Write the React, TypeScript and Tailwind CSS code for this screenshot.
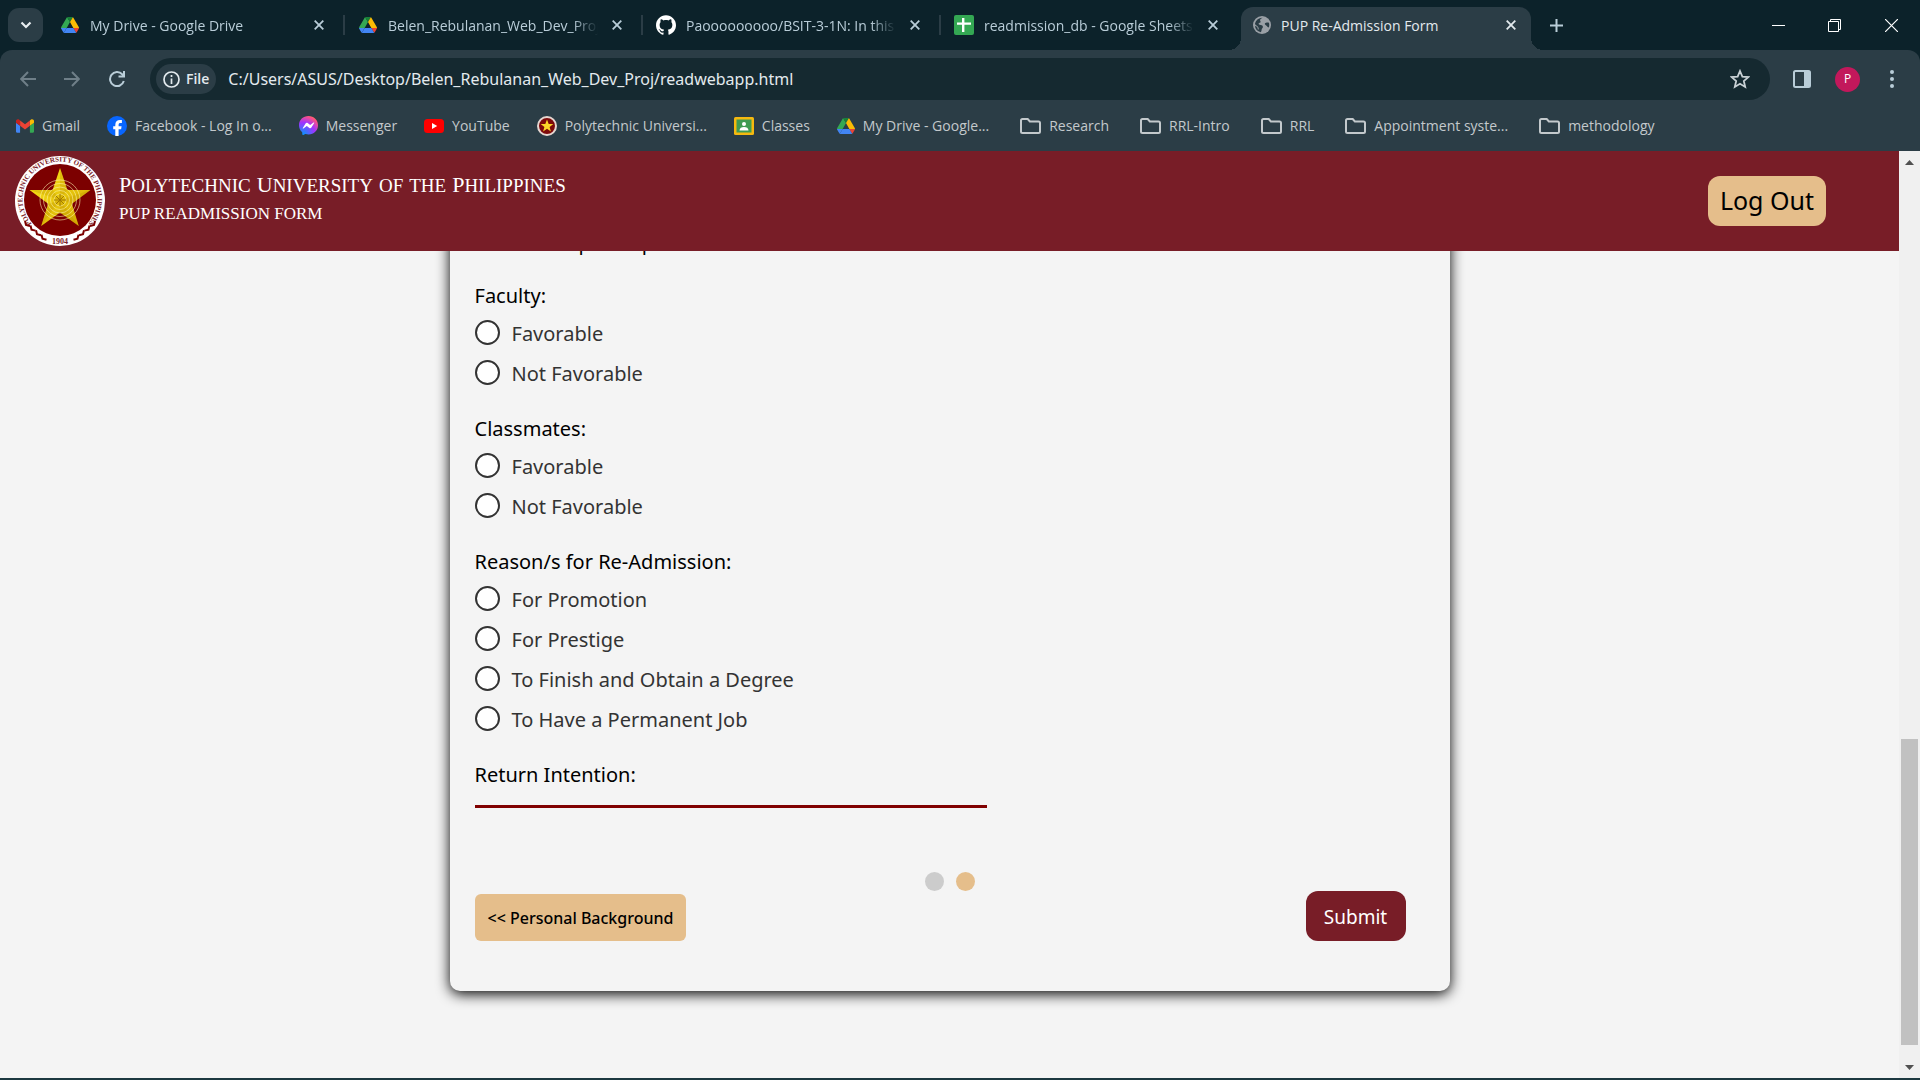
import React from "react";
import { SiGithub } from "react-icons/si";

type IconProps = { className?: string };

const DriveIcon = ({ className = "size-[18px]" }: IconProps) => (
  <svg className={className} viewBox="0 0 87.3 78" aria-hidden="true">
    <path fill="#4285f4" d="m6.6 66.85 3.85 6.65c.8 1.4 1.95 2.5 3.3 3.3l13.75-23.8h-27.5c0 1.55.4 3.1 1.2 4.5z" />
    <path fill="#34a853" d="m43.65 25-13.75-23.8c-1.35.8-2.5 1.9-3.3 3.3l-25.4 44a9.06 9.06 0 0 0-1.2 4.5h27.5z" />
    <path fill="#ea4335" d="m73.55 76.8c1.35-.8 2.5-1.9 3.3-3.3l1.6-2.75 7.65-13.25c.8-1.4 1.2-2.95 1.2-4.5h-27.5l5.85 11.5z" />
    <path fill="#188038" d="m43.65 25 13.75-23.8c-1.35-.8-2.9-1.2-4.5-1.2h-18.5c-1.6 0-3.15.45-4.5 1.2z" />
    <path fill="#4285f4" d="m59.8 53h-32.3l-13.75 23.8c1.35.8 2.9 1.2 4.5 1.2h50.8c1.6 0 3.15-.45 4.5-1.2z" />
    <path fill="#fbbc04" d="m73.4 26.5-12.7-22c-.8-1.4-1.95-2.5-3.3-3.3l-13.75 23.8 16.15 28h27.45c0-1.55-.4-3.1-1.2-4.5z" />
  </svg>
);

const SheetsIcon = () => (
  <svg className="size-5" viewBox="0 0 20 20" aria-hidden="true">
    <rect width="20" height="20" rx="2" fill="#34a853" />
    <path d="M8 3h2.400v4.400H17v2.400h-6.600V17H8V9.800H3V7.400h5z" fill="#fff" />
  </svg>
);

const GlobeIcon = () => (
  <svg className="size-[18px]" viewBox="0 0 18 18" aria-hidden="true">
    <circle cx="9" cy="9" r="9" fill="#9aa0a6" />
    <path
      d="M9.500 1.800c-1 .8-2.200.9-2.400 2.200-.1 1 .9 1.300.4 2.200-.4.700-1.600.5-1.900 1.400-.3 1 .8 1.200 2 1.300 1.500.1 2.400.8 2.300 2-.1 1-1 1.300-1.200 2.300-.1.900-.2 2-.9 3A7.300 7.300 0 0 1 1.900 9.800c1 .6 2.400 1 2.600 2 .2.800.1 1.600.9 2 .6-1.200.3-2.300-.5-3.100C3.700 9.500 2 9 2 7.600a7.300 7.300 0 0 1 7.500-5.800zM15.900 6.800c.5 1.300.5 3.300-.1 4.700-1-.1-1.400-.7-2-1.500-.7-.9-1.900-1-2-2 0-1 1-1.400 2-1.500.7-.1 1.400-.1 2.100.3z"
      fill="#2b3d46"
    />
  </svg>
);

const GmailIcon = () => (
  <svg className="h-3.5 w-[18px]" viewBox="52 42 88 66" aria-hidden="true">
    <path fill="#4285f4" d="M58 108h14V74L52 59v43c0 3.320 2.690 6 6 6" />
    <path fill="#34a853" d="M120 108h14c3.320 0 6-2.690 6-6V59l-20 15" />
    <path fill="#fbbc04" d="M120 48v26l20-15v-8c0-7.420-8.470-11.650-14.400-7.200" />
    <path fill="#ea4335" d="M72 74V48l24 18 24-18v26L96 92" />
    <path fill="#c5221f" d="M52 51v8l20 15V48l-5.600-4.200c-5.940-4.450-14.400-.22-14.400 7.200" />
  </svg>
);

const FacebookIcon = () => (
  <svg className="size-5" viewBox="0 0 20 20" aria-hidden="true">
    <circle cx="10" cy="10" r="10" fill="#0866ff" />
    <path d="M8.300 20v-6.700H6.200v-3h2.100V8.900c0-3.400 1.600-5 4.900-5 .6 0 1.300.1 1.700.2v2.800h-1.300c-1.500 0-2 .6-2 1.900v1.500h3l-.5 3h-2.500V20z" fill="#fff" />
  </svg>
);

const MessengerIcon = () => (
  <svg className="size-[19px]" viewBox="0 0 24 24" aria-hidden="true">
    <defs>
      <radialGradient id="msg" cx="20%" cy="100%" r="110%">
        <stop offset="0" stopColor="#0099ff" />
        <stop offset="0.6" stopColor="#a033ff" />
        <stop offset="0.93" stopColor="#ff5280" />
        <stop offset="1" stopColor="#ff7061" />
      </radialGradient>
    </defs>
    <path fill="url(#msg)" d="M12 0C5.240 0 0 4.950 0 11.640c0 3.500 1.430 6.520 3.770 8.610.2.180.31.430.32.690l.06 2.140c.02.680.72 1.120 1.350.85l2.380-1.050c.2-.09.430-.1.640-.05 1.100.3 2.260.46 3.480.46 6.760 0 12-4.950 12-11.640S18.760 0 12 0" />
    <path fill="#fff" d="m4.800 15.040 3.520-5.590c.56-.89 1.760-1.110 2.610-.48l2.800 2.100c.26.190.61.190.87 0l3.780-2.870c.5-.38 1.160.22.82.76l-3.520 5.590c-.56.89-1.760 1.110-2.610.48l-2.800-2.100a.72.72 0 0 0-.87 0l-3.780 2.870c-.5.380-1.160-.22-.82-.76" />
  </svg>
);

const YoutubeIcon = () => (
  <svg className="h-3.5 w-5" viewBox="0 0 20 14" aria-hidden="true">
    <rect width="20" height="14" rx="3.500" fill="#f00" />
    <path d="M8 4v6l5.200-3z" fill="#fff" />
  </svg>
);

const PupIcon = () => (
  <svg className="size-5" viewBox="0 0 20 20" aria-hidden="true">
    <circle cx="10" cy="10" r="9" fill="#7d0a0a" stroke="#e6d6d0" strokeWidth="2" />
    <path d="M10 3.500l1.700 4.500h4.600l-3.700 2.900 1.300 4.700-3.900-2.800-3.900 2.800 1.300-4.700L3.700 8h4.600z" fill="#fbd628" />
  </svg>
);

const ClassroomIcon = () => (
  <svg className="h-[18px] w-5" viewBox="0 0 20 18" aria-hidden="true">
    <rect width="20" height="18" rx="1.500" fill="#f6b90f" />
    <rect x="2.500" y="2.500" width="15" height="13" fill="#3f9b52" />
    <circle cx="10" cy="7" r="2" fill="#fff" />
    <path d="M5.500 13.500c0-2.500 2-3.600 4.500-3.600s4.500 1.100 4.500 3.600z" fill="#fff" />
  </svg>
);

const FolderIcon = () => (
  <svg className="ml-1 h-4 w-[21px]" viewBox="0 0 21 16" fill="none" stroke="#c3c9cc" strokeWidth="2" aria-hidden="true">
    <path d="M2.500 1h5.200l2.200 2.500h8.600A1.500 1.500 0 0 1 20 5v8.500a1.500 1.500 0 0 1-1.500 1.500h-16A1.500 1.500 0 0 1 1 13.500v-11A1.500 1.500 0 0 1 2.500 1z" />
  </svg>
);

const CloseIcon = () => (
  <svg className="size-2.5" viewBox="0 0 10 10" stroke="currentColor" strokeWidth="1.800" aria-hidden="true">
    <path d="M0.700 0.700l8.600 8.600M9.300 0.700L0.700 9.300" />
  </svg>
);

const starPoints = (cx: number, cy: number, outer: number, inner: number) =>
  Array.from({ length: 10 }, (_, i) => {
    const r = i % 2 ? inner : outer;
    const a = (Math.PI / 5) * i - Math.PI / 2;
    return `${cx + r * Math.cos(a)},${cy + r * Math.sin(a)}`;
  }).join(" ");

const Seal = () => (
  <svg className="size-[90px] shrink-0" viewBox="0 0 90 90" role="img" aria-label="University seal">
    <defs>
      <path id="ring" d="M18 69A37.500 37.500 0 1 1 72 69" />
      <linearGradient id="gold" x1="0" x2="1" y1="0" y2="1">
        <stop offset="0" stopColor="#ffe81a" />
        <stop offset="1" stopColor="#cfa400" />
      </linearGradient>
    </defs>
    <circle cx="45" cy="45" r="45" fill="#fff" />
    <circle cx="45" cy="44" r="36" fill="#7c0000" />
    <text fontFamily="Liberation Serif, serif" fontSize="7" fontWeight="700" fill="#7c1c28">
      <textPath href="#ring" startOffset="50%" textAnchor="middle">
        POLYTECHNIC UNIVERSITY OF THE PHILIPPINES
      </textPath>
    </text>
    <polygon points={starPoints(45, 44, 32, 12.5)} fill="url(#gold)" />
    {[0, 1, 2, 3, 4].map((i) => (
      <path key={i} d="M45 44V12L52.300 33.900z" fill="#b98d00" opacity="0.3" transform={`rotate(${i * 72} 45 44)`} />
    ))}
    {[6, 9.5, 13, 16.5, 20].map((r) => (
      <circle key={r} cx="45" cy="44" r={r} fill="none" stroke="#fff6b0" strokeWidth="0.800" opacity="0.700" />
    ))}
    <path d="M41 40l8 8M49 40l-8 8M45 38v12M39 44h12" stroke="#a07800" strokeWidth="1" />
    {[0, 1, 2, 3].map((i) => (
      <g key={i} fill="none" stroke="#7c0000" strokeWidth="2">
        <path d={`M${10 + i * 5.5} ${65 + i * 4.6}l1 4 4 1`} />
        <path d={`M${80 - i * 5.5} ${65 + i * 4.6}l-1 4-4 1`} />
      </g>
    ))}
    <text x="45" y="88" textAnchor="middle" fontFamily="Liberation Serif, serif" fontSize="8" fontWeight="700" fill="#7c1c28">
      1904
    </text>
  </svg>
);

const tabs = [
  { title: "My Drive - Google Drive", icon: <DriveIcon /> },
  { title: "Belen_Rebulanan_Web_Dev_Proj", icon: <DriveIcon /> },
  { title: "Paooooooooo/BSIT-3-1N: In this", icon: <SiGithub className="size-5 text-white" /> },
  { title: "readmission_db - Google Sheets", icon: <SheetsIcon /> },
];

const bookmarks = [
  { title: "Gmail", icon: <GmailIcon /> },
  { title: "Facebook - Log In o...", icon: <FacebookIcon /> },
  { title: "Messenger", icon: <MessengerIcon /> },
  { title: "YouTube", icon: <YoutubeIcon /> },
  { title: "Polytechnic Universi...", icon: <PupIcon /> },
  { title: "Classes", icon: <ClassroomIcon /> },
  { title: "My Drive - Google...", icon: <DriveIcon /> },
  { title: "Research", icon: <FolderIcon /> },
  { title: "RRL-Intro", icon: <FolderIcon /> },
  { title: "RRL", icon: <FolderIcon /> },
  { title: "Appointment syste...", icon: <FolderIcon /> },
  { title: "methodology", icon: <FolderIcon /> },
];

function TabStrip() {
  return (
    <div className="flex h-[50px] shrink-0 items-center bg-[#0c222a] text-sm text-[#b9cdd8]">
      <button aria-label="Search tabs" className="ml-2 flex h-[34px] w-[35px] items-center justify-center rounded-[11px] bg-[#2b3d46]">
        <svg className="h-2 w-3" viewBox="0 0 12 8" fill="none" stroke="#e8eef1" strokeWidth="2.200" aria-hidden="true">
          <path d="M1.500 1.500L6 6l4.500-4.500" />
        </svg>
      </button>
      <div role="tablist" className="ml-1 flex h-full">
        {tabs.map((t, i) => (
          <div key={t.title} className="flex w-[298px] items-center pl-[13px]">
            <div role="tab" aria-selected="false" className="flex min-w-0 flex-1 items-center gap-2.5">
              <span className="flex w-5 shrink-0 justify-center">{t.icon}</span>
              <span className="w-[210px] overflow-hidden pt-0.5 whitespace-nowrap [mask-image:linear-gradient(to_right,black_88%,transparent)]">
                {t.title}
              </span>
            </div>
            <button aria-label="Close tab" className="flex size-6 shrink-0 items-center justify-center">
              <CloseIcon />
            </button>
            <span className={i < 3 ? "ml-3 h-5 w-0.5 bg-[#2b3d46]" : "ml-3 w-0.5"} />
          </div>
        ))}
        <div className="relative ml-0.5 flex h-[43px] w-[290px] items-center self-end rounded-t-xl bg-[#2b3d46] pb-[7px] pl-3 text-[#e3eaee]">
          <span className="absolute bottom-0 -left-3 size-3 bg-[radial-gradient(circle_at_top_left,transparent_12px,#2b3d46_12px)]" />
          <span className="absolute -right-3 bottom-0 size-3 bg-[radial-gradient(circle_at_top_right,transparent_12px,#2b3d46_12px)]" />
          <div role="tab" aria-selected="true" className="flex flex-1 items-center gap-2.5">
            <GlobeIcon />
            <span className="pt-0.5">PUP Re-Admission Form</span>
          </div>
          <button aria-label="Close tab" className="mr-2 flex size-6 items-center justify-center">
            <CloseIcon />
          </button>
        </div>
      </div>
      <button aria-label="New tab" className="ml-3 flex size-[26px] items-center justify-center">
        <svg className="size-[13px]" viewBox="0 0 13 13" stroke="currentColor" strokeWidth="2" aria-hidden="true">
          <path d="M6.500 0v13M0 6.500h13" />
        </svg>
      </button>
      <div className="ml-auto flex h-full text-white">
        <button aria-label="Minimize" className="flex w-14 items-center justify-center">
          <svg className="size-[13px]" viewBox="0 0 13 13" stroke="currentColor" aria-hidden="true">
            <path d="M0 6.500h13" />
          </svg>
        </button>
        <button aria-label="Restore" className="flex w-14 items-center justify-center">
          <svg className="size-[13px]" viewBox="0 0 13 13" fill="none" stroke="currentColor" aria-hidden="true">
            <path d="M0.500 2.500h10v10h-10zM2.500 2.500v-2h10v10h-2" />
          </svg>
        </button>
        <button aria-label="Close window" className="flex w-[58px] items-center justify-center">
          <svg className="size-[13px]" viewBox="0 0 13 13" stroke="currentColor" strokeWidth="1.200" aria-hidden="true">
            <path d="M0 0l13 13M13 0L0 13" />
          </svg>
        </button>
      </div>
    </div>
  );
}

function Toolbar() {
  return (
    <div className="shrink-0 bg-[#0c222a]">
      <div className="flex h-[58px] items-center rounded-t-xl bg-[#2b3d46] text-[#b9cdd8]">
        <div className="flex w-[150px] pl-1.5">
          <button aria-label="Back" className="flex h-9 w-11 items-center justify-center text-[#6f7f88]">
            <svg className="size-4" viewBox="0 0 16 16" fill="none" stroke="currentColor" strokeWidth="2" aria-hidden="true">
              <path d="M16 8H1.500M8 1L1.200 8 8 15" />
            </svg>
          </button>
          <button aria-label="Forward" className="flex h-9 w-11 items-center justify-center text-[#6f7f88]">
            <svg className="size-4" viewBox="0 0 16 16" fill="none" stroke="currentColor" strokeWidth="2" aria-hidden="true">
              <path d="M0 8h14.500M8 1l6.800 7L8 15" />
            </svg>
          </button>
          <button aria-label="Reload" className="flex h-9 w-[46px] items-center justify-center">
            <svg className="size-4" viewBox="0 0 16 16" fill="none" stroke="currentColor" strokeWidth="2" aria-hidden="true">
              <path d="M14.800 10A7 7 0 1 1 13.200 3.300L15 5M15 0v5.500H9.500" />
            </svg>
          </button>
        </div>
        <div className="flex h-[42px] flex-1 items-center rounded-full bg-[#152930] pr-4 pl-1.5">
          <button className="flex h-[30px] items-center gap-1.5 rounded-full bg-[#2b3d46] px-[7px] text-sm font-semibold text-[#e3eaee]">
            <svg className="size-[17px]" viewBox="0 0 17 17" fill="none" stroke="currentColor" strokeWidth="1.700" aria-hidden="true">
              <circle cx="8.500" cy="8.500" r="7.500" />
              <path d="M8.500 7.500V13M8.500 4v2" />
            </svg>
            File
          </button>
          <input
            aria-label="Address"
            readOnly
            value="C:/Users/ASUS/Desktop/Belen_Rebulanan_Web_Dev_Proj/readwebapp.html"
            className="ml-3 min-w-0 flex-1 bg-transparent font-['Noto_Sans',sans-serif] text-base text-[#e3eaee] outline-none"
          />
          <button aria-label="Bookmark this tab" className="flex size-7 items-center justify-center text-[#c9d1d5]">
            <svg className="size-5" viewBox="0 0 20 20" fill="none" stroke="currentColor" strokeWidth="1.800" aria-hidden="true">
              <polygon points={starPoints(10, 10.8, 8.8, 4)} />
            </svg>
          </button>
        </div>
        <div className="flex w-[150px] items-center pl-[23px]">
          <button aria-label="Side panel" className="flex w-[18px]">
            <svg className="size-[18px]" viewBox="0 0 18 18" aria-hidden="true">
              <rect x="1" y="1" width="16" height="16" rx="1.500" fill="none" stroke="currentColor" strokeWidth="2" />
              <path d="M11 1h6v16h-6z" fill="currentColor" />
            </svg>
          </button>
          <button aria-label="Profile" className="ml-6 flex size-[25px] items-center justify-center rounded-full bg-[#c2185b] text-xs text-white">
            P
          </button>
          <button aria-label="Menu" className="ml-5 flex size-6 items-center justify-center">
            <svg className="h-[18px] w-1" viewBox="0 0 4 18" fill="currentColor" aria-hidden="true">
              <circle cx="2" cy="2" r="2" />
              <circle cx="2" cy="9" r="2" />
              <circle cx="2" cy="16" r="2" />
            </svg>
          </button>
        </div>
      </div>
    </div>
  );
}

function Bookmarks() {
  return (
    <nav aria-label="Bookmarks" className="flex h-[43px] shrink-0 items-center gap-[27px] bg-[#2b3d46] pb-2 pl-4 text-sm text-[#c3c9cc]">
      {bookmarks.map((b) => (
        <a key={b.title} href="#" className="flex items-center gap-2 whitespace-nowrap">
          {b.icon}
          {b.title}
        </a>
      ))}
    </nav>
  );
}

function Choices({ title, name, options }: { title: string; name: string; options: string[] }) {
  return (
    <fieldset className="mb-[23px]">
      <legend className="pb-[3px] text-xl leading-[27px] text-black">{title}</legend>
      {options.map((o) => (
        <label key={o} className="flex h-10 items-center gap-3 text-xl text-[#333]">
          <input type="radio" name={name} className="size-[25px] appearance-none rounded-full border-2 border-[#333] bg-white checked:bg-[#7b1e28]" />
          <span className="pt-[3px]">{o}</span>
        </label>
      ))}
    </fieldset>
  );
}

const titleWords = ["Polytechnic", "University", "of", "the", "Philippines"];

export default function App() {
  return (
    <div className="flex h-screen flex-col overflow-hidden bg-[#0c222a] font-['Open_Sans',sans-serif]">
      <TabStrip />
      <Toolbar />
      <Bookmarks />
      <div className="flex min-h-0 flex-1 bg-[#f4f4f4] font-['Noto_Sans',sans-serif]">
        <div className="flex min-w-0 flex-1 flex-col">
          <header className="flex h-[100px] shrink-0 items-center bg-[#781d27] pr-[73px] pl-[15px] text-white">
            <Seal />
            <div className="ml-3.5 pb-1 font-['Liberation_Serif',serif]">
              <h1 className="flex items-baseline gap-1.5 text-[19px] leading-7 uppercase">
                {titleWords.map((w) => (
                  <span key={w} className={w.length > 3 ? "inline-block first-letter:text-[22px]" : "inline-block"}>
                    {w}
                  </span>
                ))}
              </h1>
              <p className="text-[17px] leading-7">PUP READMISSION FORM</p>
            </div>
            <button className="ml-auto h-[50px] rounded-xl bg-[#e5be8b] px-3 text-[25px] text-black">Log Out</button>
          </header>
          <main className="flex min-h-0 flex-1 flex-col justify-end overflow-hidden pb-[87px]">
            <form className="mx-auto w-full max-w-[1000px] rounded-[10px] bg-[#f4f4f4] px-[25px] pb-[50px] shadow-[0_3px_14px_black]">
              <h2 className="mb-[26px] text-xl leading-[27px] text-black">Relationship with peers:</h2>
              <Choices title="Faculty:" name="faculty" options={["Favorable", "Not Favorable"]} />
              <Choices title="Classmates:" name="classmates" options={["Favorable", "Not Favorable"]} />
              <Choices
                title="Reason/s for Re-Admission:"
                name="reason"
                options={["For Promotion", "For Prestige", "To Finish and Obtain a Degree", "To Have a Permanent Job"]}
              />
              <label htmlFor="intention" className="block text-xl leading-7 text-black">
                Return Intention:
              </label>
              <input id="intention" className="block h-[19px] w-[512px] border-b-[3px] border-[#800000] bg-transparent text-base outline-none" />
              <div className="mt-16 flex justify-center gap-3">
                <span className="size-[19px] rounded-full bg-[#ccc]" />
                <span className="size-[19px] rounded-full bg-[#e5be8b]" />
              </div>
              <div className="flex items-end justify-between pr-[19px]">
                <button type="button" className="h-[47px] rounded-md bg-[#e5be8b] px-[13px] text-base font-medium text-black">
                  &lt;&lt; Personal Background
                </button>
                <button type="submit" className="h-[50px] w-[100px] rounded-xl bg-[#781d27] pt-0.5 text-[19px] text-white">
                  Submit
                </button>
              </div>
            </form>
          </main>
        </div>
        <div className="flex w-[21px] shrink-0 flex-col items-center bg-[#f0f0f0]">
          <svg className="mt-[9px] h-[5px] w-[9px]" viewBox="0 0 9 5" aria-hidden="true">
            <path d="M0 5l4.500-5L9 5z" fill="#505050" />
          </svg>
          <span className="mt-auto h-[306px] w-[17px] bg-[#c1c1c1]" />
          <svg className="mt-5 mb-2 h-[5px] w-[9px]" viewBox="0 0 9 5" aria-hidden="true">
            <path d="M0 0l4.500 5L9 0z" fill="#505050" />
          </svg>
        </div>
      </div>
      <div className="h-0.5 shrink-0 bg-[#1c3840]" />
    </div>
  );
}
